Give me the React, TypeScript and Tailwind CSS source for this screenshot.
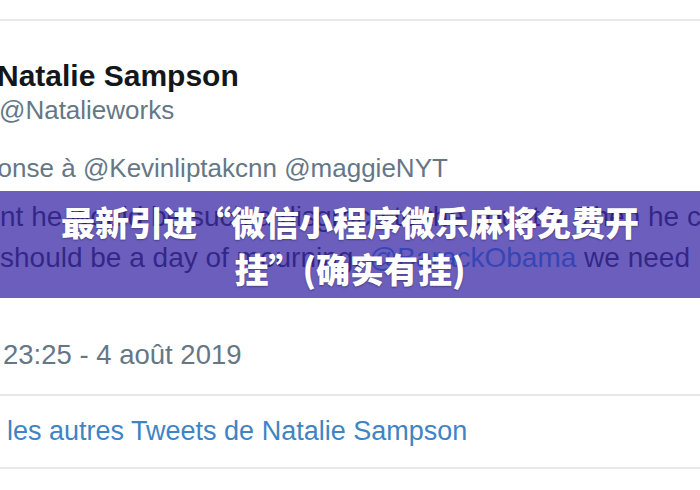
import React from 'react';

const sans = "font-['Liberation_Sans',Arial,sans-serif]";

const TweetPage: React.FC = () => {
  return (
    <div className={`relative w-[700px] h-[490px] overflow-hidden bg-white ${sans}`}>
      <div className="h-[19px]" />
      <div className="border-t-2 border-[#e6e8ea]" />

      <div className="pt-[40px] whitespace-nowrap">
        <div className="-ml-[3px] text-[30px] leading-[30px] font-bold text-[#14171a]">Natalie Sampson</div>
        <div className="mt-[6px] -ml-[1px] text-[26px] leading-[26px] text-[#657786]">@Natalieworks</div>
        <div className="mt-[32px] -ml-[79px] text-[26px] leading-[26px] text-[#657786]">
          En réponse à <span>@Kevinliptakcnn</span> <span>@maggieNYT</span>
        </div>

        <div className="mt-[15px] text-[28px] leading-[41px] text-[#14171a]">
          <div>nt he would be such a disgrace to the country. Then he c</div>
          <div>
            should be a day of mourning. <span className="text-[#1b95e0]">@BarackObama</span> we need
          </div>
        </div>

        <div className="mt-[63px] ml-[3px] text-[27.5px] leading-[28px] text-[#657786]">23:25 - 4 août 2019</div>
      </div>

      <div className="mt-[25px] border-t-2 border-[#e6e8ea]" />
      <div className="py-[22px] pl-[7px] whitespace-nowrap text-[27px] leading-[27px] text-[#3f84c4]">
        les autres Tweets de Natalie Sampson
      </div>
      <div className="border-t-2 border-[#e6e8ea]" />

      <div className="absolute left-0 top-[191px] flex h-[107px] w-full flex-col items-center justify-center bg-[rgba(62,44,168,0.76)] text-center font-['Noto_Sans_CJK_SC',sans-serif] text-[34px] leading-[47px] font-black text-white [text-shadow:0_1px_2px_rgba(0,0,0,0.35)]">
        <span>最新引进“微信小程序微乐麻将免费开</span>
        <span>挂”(确实有挂)</span>
      </div>
    </div>
  );
};

export default function App() {
  return <TweetPage />;
}
